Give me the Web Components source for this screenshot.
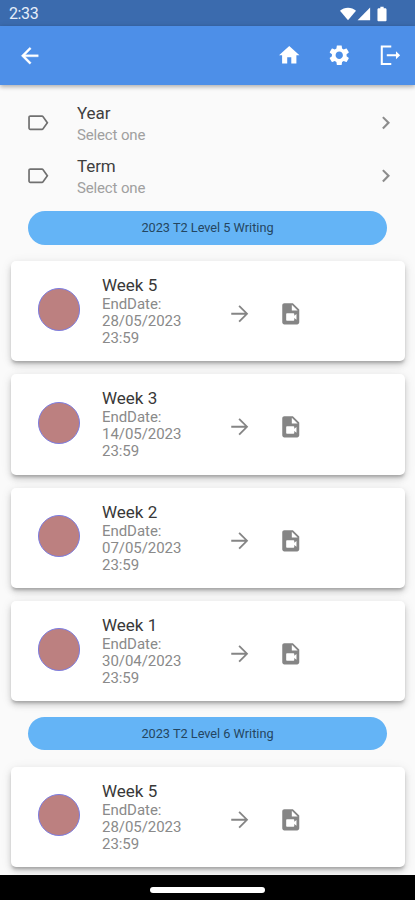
<!DOCTYPE html>
<html lang="en">
<head>
<meta charset="utf-8">
<title>Weekly tasks</title>
<style>
html, body { margin: 0; height: 100%; overflow: hidden; }
body { font-family: Roboto, "Liberation Sans", sans-serif; }
</style>
</head>
<body>
<app-screen></app-screen>
<script>
const define = (name, html) => {
  const t = document.createElement('template');
  t.innerHTML = html;
  customElements.define(name, class extends HTMLElement {
    constructor() {
      super();
      this.attachShadow({ mode: 'open' }).appendChild(t.content.cloneNode(true));
    }
  });
};

const ICONS = {
  back: '<path d="M20 11H7.83l5.59-5.59L12 4l-8 8 8 8 1.41-1.41L7.83 13H20z" stroke="currentColor" stroke-width=".3"/>',
  forward: '<path d="M12 4l-1.2 1.2 5.93 5.95H4v1.7h12.730l-5.930 5.950L12 20l8-8z"/>',
  home: '<path d="M10 20v-6h4v6h5v-8h3L12 3 2 12h3v8z"/>',
  gear: '<path d="M19.14 12.94c.04-.3.06-.61.06-.94 0-.32-.02-.64-.07-.94l2.03-1.58c.18-.14.23-.41.12-.61l-1.92-3.32c-.12-.22-.37-.29-.59-.22l-2.39.96c-.5-.38-1.03-.7-1.62-.94l-.36-2.54c-.04-.24-.24-.41-.48-.41h-3.84c-.24 0-.43.17-.47.41l-.36 2.54c-.59.24-1.13.57-1.62.94l-2.39-.96c-.22-.08-.47 0-.59.22L2.74 8.87c-.12.21-.08.47.12.61l2.03 1.58c-.05.3-.09.63-.09.94s.02.64.07.94l-2.03 1.58c-.18.14-.23.41-.12.61l1.92 3.32c.12.22.37.29.59.22l2.39-.96c.5.38 1.03.7 1.62.94l.36 2.54c.05.24.24.41.48.41h3.84c.24 0 .44-.17.47-.41l.36-2.54c.59-.24 1.13-.56 1.62-.94l2.39.96c.22.08.47 0 .59-.22l1.92-3.32c.12-.22.07-.47-.12-.61l-2.01-1.58zM12 15.6c-1.98 0-3.6-1.62-3.6-3.6s1.62-3.6 3.6-3.6 3.6 1.62 3.6 3.6-1.62 3.6-3.6 3.6z"/>',
  exit: '<path d="M13 3.4H3.700v17.200H13" fill="none" stroke="currentColor" stroke-width="2"/><path d="M8.600 11h9V8l4.100 4-4.100 4v-3h-9z"/>',
  label: '<path d="M17.63 5.84C17.27 5.33 16.67 5 16 5L5 5.01C3.9 5.01 3 5.9 3 7v10c0 1.1.9 1.99 2 1.99L16 19c.67 0 1.27-.33 1.63-.84L22 12l-4.37-6.16zM16.200 17.400H4.600V6.600h11.600l3.850 5.400z"/>',
  chevron: '<path d="M10 6L8.59 7.41 13.17 12l-4.58 4.59L10 18l6-6z"/>',
  video: '<path fill-rule="evenodd" d="M14 2H6c-1.1 0-2 .9-2 2v16c0 1.1.9 2 2 2h12c1.1 0 2-.9 2-2V8l-6-6zM13 9V3.5L18.5 9H13zM8.4 11.500h6.200c.4 0 .7.3.7.7v1.700l2.100-1.600v5.400l-2.100-1.600v1.700c0 .4-.3.7-.7.7H8.400c-.4 0-.7-.3-.7-.7v-5.600c0-.4.3-.7.7-.7z"/>',
  wifi: '<path d="M12 21.5L0 7.2C3.3 4.3 7.5 2.8 12 2.8s8.700 1.500 12 4.400z"/>',
  signal: '<path d="M1 22.500h21.500V1z"/>',
  battery: '<path d="M15.700 3.500H14.500V1h-5v2.500H7.300C6.300 3.500 5.200 4.300 5.200 5.300v15.900c0 1 .8 1.800 1.800 1.800h10c1 0 1.800-.8 1.800-1.800V5.300c0-1-1.100-1.800-2.100-1.800z"/>'
};

customElements.define('app-icon', class extends HTMLElement {
  constructor() {
    super();
    this.attachShadow({ mode: 'open' });
  }
  connectedCallback() {
    this.shadowRoot.innerHTML = `
      <style>
        :host { display: block; flex: none; width: 25.500px; height: 25.500px; }
        svg { display: block; width: 100%; height: 100%; fill: currentColor; }
      </style>
      <svg viewBox="0 0 24 24">${ICONS[this.getAttribute('name')]}</svg>`;
  }
});

define('status-bar', `
  <style>
    :host { display: flex; align-items: center; box-sizing: border-box; height: 26px; padding: 2px 25px 0 9px;
      background: #3b6bae; color: #fff; }
    span { flex: 1; font-size: 16px; line-height: 22px; color: #e6eefa; letter-spacing: -.4px; }
    app-icon { width: 16px; height: 16px; }
    .signal { width: 14px; height: 14px; margin-left: 1px; }
    .battery { margin-left: 3px; }
  </style>
  <span><slot></slot></span>
  <app-icon name="wifi"></app-icon>
  <app-icon class="signal" name="signal"></app-icon>
  <app-icon class="battery" name="battery"></app-icon>`);

define('app-bar', `
  <style>
    :host { display: flex; align-items: center; gap: 26px; box-sizing: border-box; height: 59px; padding: 0 13px 0 17px;
      background: #4d8fe8; color: #fff; position: relative;
      box-shadow: 0 2px 4px rgba(0,0,0,.22), 0 1px 6px rgba(0,0,0,.12); }
    app-icon { width: 24.500px; height: 24.500px; }
    .back { width: 25.500px; height: 25.500px; margin-right: auto; }
  </style>
  <app-icon class="back" name="back"></app-icon>
  <app-icon name="home"></app-icon>
  <app-icon name="gear"></app-icon>
  <app-icon name="exit"></app-icon>`);

define('select-row', `
  <style>
    :host { display: flex; align-items: center; height: 53px; padding: 0 17px 0 25px; }
    .text { flex: 1; margin-left: 26.500px; padding-top: 1px; }
    .name { font-size: 17px; line-height: 22px; color: #3f3f3f; letter-spacing: -.1px; }
    .hint { font-size: 15px; line-height: 22px; color: #a0a0a0; letter-spacing: -.15px; }
    app-icon { margin-top: -1px; }
    .tag { color: #707070; }
    .go { color: #8c8c8c; }
  </style>
  <app-icon class="tag" name="label"></app-icon>
  <div class="text">
    <div class="name"><slot></slot></div>
    <div class="hint"><slot name="hint"></slot></div>
  </div>
  <app-icon class="go" name="chevron"></app-icon>`);

define('group-pill', `
  <style>
    :host { display: flex; align-items: center; justify-content: center; box-sizing: border-box; height: 33.500px;
      margin: 0 28px; border-radius: 17px; background: #64b4f6; color: #244661; font-size: 12.750px; letter-spacing: -.02px; }
  </style>
  <slot></slot>`);

define('week-card', `
  <style>
    :host { display: flex; box-sizing: border-box; height: 100.300px; margin: 0 10px 0 11px; padding-left: 26.500px;
      border-radius: 5px; background: #fff;
      box-shadow: 0 3px 3px -1px rgba(0,0,0,.2), 0 4px 6px rgba(0,0,0,.14), 0 2px 12px rgba(0,0,0,.09); }
    .dot { box-sizing: border-box; flex: none; width: 42.500px; height: 42.500px; margin-top: 27.300px;
      border-radius: 50%; background: #bc8080; border: 1px solid #7c7ce0; }
    .text { width: 125px; margin-left: 22px; padding-top: 14px; }
    .title { font-size: 17px; line-height: 21px; color: #383838; }
    .date { width: 95px; font-size: 15px; line-height: 17px; color: #8a8a8a; letter-spacing: -.05px; }
    app-icon { margin-top: 40px; color: #858585; }
    .video { margin-left: 25.500px; }
  </style>
  <div class="dot"></div>
  <div class="text">
    <div class="title"><slot></slot></div>
    <div class="date"><slot name="date"></slot></div>
  </div>
  <app-icon name="forward"></app-icon>
  <app-icon class="video" name="video"></app-icon>`);

define('nav-handle', `
  <style>
    :host { display: flex; justify-content: center; box-sizing: border-box; height: 25px; padding-top: 12px; background: #000; position: relative; }
    div { width: 115px; height: 5.500px; border-radius: 3px; background: #fff; }
  </style>
  <div></div>`);

const card = (week, date) => `<week-card>${week}<span slot="date">EndDate: ${date} 23:59</span></week-card>`;

define('app-screen', `
  <style>
    :host { display: flex; flex-direction: column; height: 900px; background: #fafafa; }
    main { flex: 1; min-height: 0; overflow: hidden; padding-top: 12px; }
    .cards { display: flex; flex-direction: column; gap: 13px; padding: 16.500px 0 15.500px; }
  </style>
  <status-bar>2:33</status-bar>
  <app-bar></app-bar>
  <main>
    <select-row>Year<span slot="hint">Select one</span></select-row>
    <select-row>Term<span slot="hint">Select one</span></select-row>
    <group-pill style="margin-top: 8px">2023 T2 Level 5 Writing</group-pill>
    <div class="cards">
      ${card('Week 5', '28/05/2023')}
      ${card('Week 3', '14/05/2023')}
      ${card('Week 2', '07/05/2023')}
      ${card('Week 1', '30/04/2023')}
    </div>
    <group-pill>2023 T2 Level 6 Writing</group-pill>
    <div class="cards">
      ${card('Week 5', '28/05/2023')}
    </div>
  </main>
  <nav-handle></nav-handle>`);
</script>
</body>
</html>
